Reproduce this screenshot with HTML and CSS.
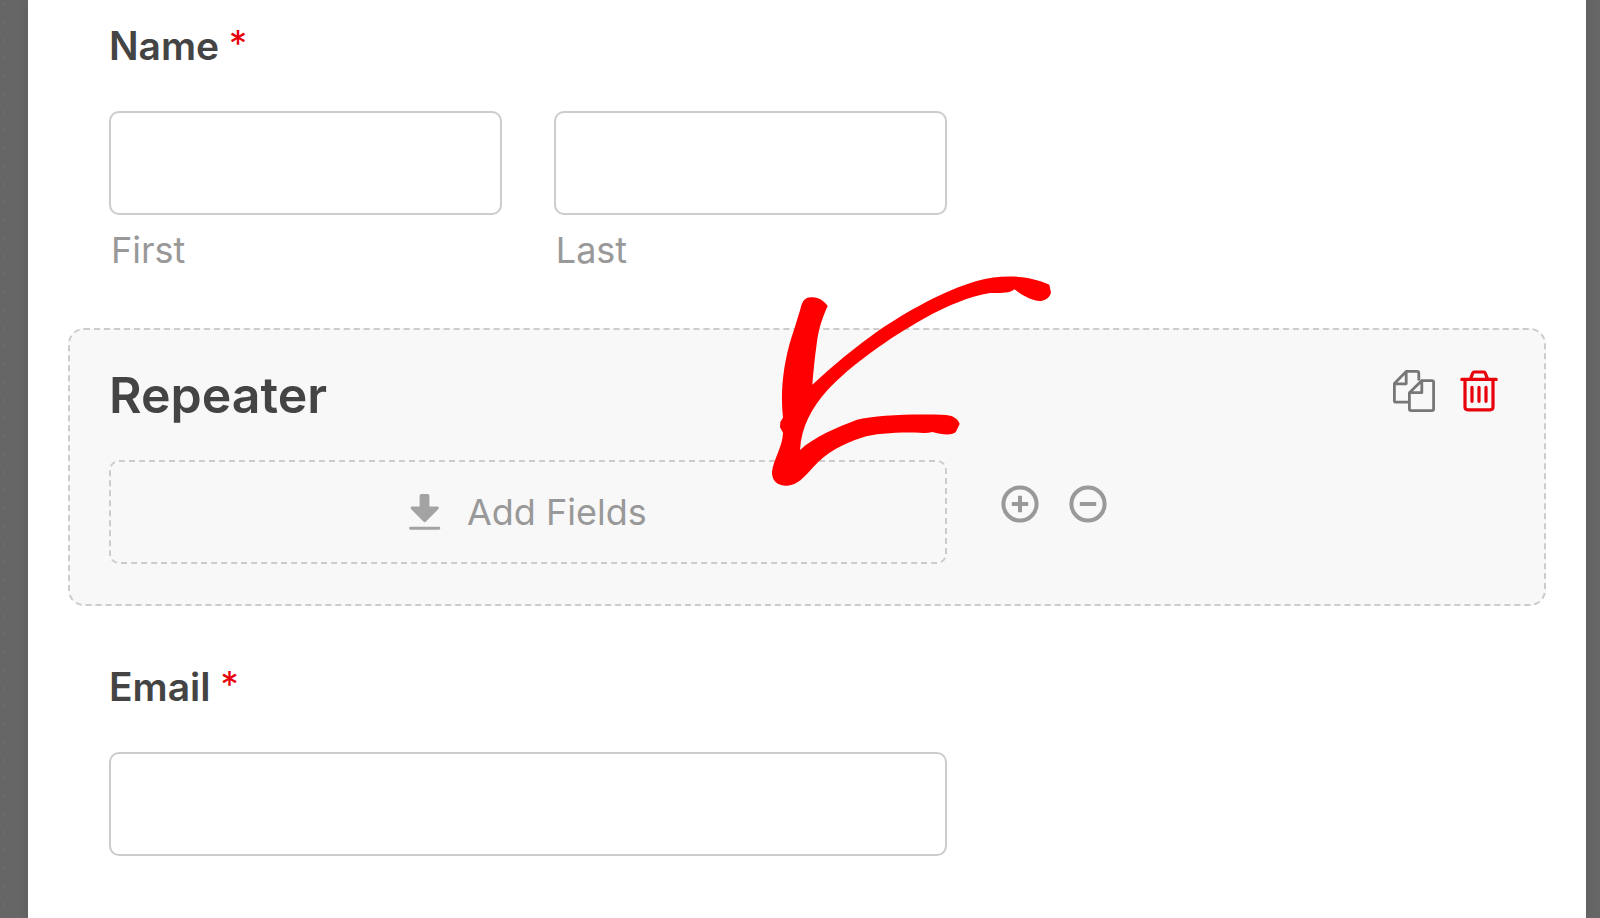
FILE: index.html
```html
<!DOCTYPE html>
<html lang="en">
<head>
<meta charset="utf-8">
<title>Form preview</title>
<link rel="stylesheet" href="styles.css">
</head>
<body>
<main class="sheet">
  <form class="form">
    <fieldset class="field">
      <legend class="label">Name <span class="required">*</span></legend>
      <div class="control name-row">
        <div class="part">
          <input class="input" id="first" type="text">
          <label class="sublabel" for="first">First</label>
        </div>
        <div class="part">
          <input class="input" id="last" type="text">
          <label class="sublabel" for="last">Last</label>
        </div>
      </div>
    </fieldset>

    <section class="repeater">
      <header class="repeater-head">
        <h2 class="title">Repeater</h2>
        <div class="actions">
          <button class="icon-button copy" type="button" aria-label="Duplicate">
            <svg width="42" height="42" viewBox="0 0 42 42" fill="none" stroke="currentColor" stroke-width="2.8" stroke-linejoin="round">
              <path d="M16 32.2H3.2Q1.4 32.2 1.4 30.4V13.5L13.2 1.4H24Q25.8 1.4 25.8 3.2V10.5M13.2 2V13.8H2"/>
              <path d="M28.8 10.6H39Q40.6 10.6 40.6 12.2V38.8Q40.6 40.6 38.8 40.6H18.2Q16.4 40.6 16.4 38.8V22.7L28.8 10.6V22.7H17"/>
            </svg>
          </button>
          <button class="icon-button trash" type="button" aria-label="Delete">
            <svg width="38" height="42" viewBox="0 0 38 42" fill="none" stroke="currentColor" stroke-width="3.2" stroke-linecap="round" stroke-linejoin="round">
              <path d="M1.8 9.4H36.2M10.5 8.8L12.8 3Q13.2 2 14.2 2H23.8Q24.8 2 25.2 3L27.5 8.8M5 10V37Q5 39.8 8 39.8H30Q33 39.8 33 37V10"/>
              <path d="M12 17.3V31.3M19 17.3V31.3M26 17.3V31.3"/>
            </svg>
          </button>
        </div>
      </header>
      <div class="repeater-row">
        <button class="control dropzone" type="button">
          <svg width="32" height="38" viewBox="0 0 32 38" fill="#a3a3a3">
            <path d="M12.3 1H18.7Q20.4 1 20.4 2.7V13.6H28.6Q30.6 14.2 29.4 16L17 28.6Q15.7 29.8 14.4 28.6L2 16Q.8 14.2 2.8 13.6H10.6V2.7Q10.6 1 12.3 1Z"/>
            <rect x="0.2" y="33.8" width="31" height="3" rx="1.4"/>
          </svg>
          <span>Add Fields</span>
        </button>
        <button class="icon-button round" type="button" aria-label="Add row">
          <svg width="38" height="38" viewBox="0 0 38 38" fill="none" stroke="currentColor" stroke-width="4">
            <circle cx="19" cy="19" r="16.6"/><path d="M10.8 19H27.2M19 10.8V27.2"/>
          </svg>
        </button>
        <button class="icon-button round" type="button" aria-label="Remove row">
          <svg width="38" height="38" viewBox="0 0 38 38" fill="none" stroke="currentColor" stroke-width="4">
            <circle cx="19" cy="19" r="16.6"/><path d="M10.8 19H27.2"/>
          </svg>
        </button>
      </div>
      <svg class="arrow" width="340" height="240" viewBox="0 0 1020 720" fill="#f00" aria-hidden="true">
        <path d="M181 148C187 122 195 113 212 112C232 109 253 122 263 138C242 184 235 215 230 252C224 297 220 335 217 374C280 316 347 260 417 211C500 155 610 92 710 63C765 47 820 47 863 54C890 60 910 66 928 74L933 98C928 115 912 123 898 123C867 120 843 103 823 88C811 98 797 100 750 99C690 108 620 138 555 174C450 232 330 317 262 391C216 443 184 499 180 570C221 531 292 501 351 479C405 466 520 461 618 465C642 467 656 480 659 492L647 517C629 529 603 522 577 516Q560 520 540 518C480 516 407 519 365 533C310 551 260 576 220 621C190 654 173 675 142 677C112 678 95 661 96 635C101 596 128 560 129 518L120 502L121 486L129 473C120 394 131 310 153 237Q167 195 181 148Z"/>
      </svg>
    </section>

    <div class="field">
      <label class="label" for="email">Email <span class="required">*</span></label>
      <div class="control">
        <input class="input" id="email" type="email">
      </div>
    </div>
  </form>
</main>
</body>
</html>
```
FILE: styles.css
```css
* {
  box-sizing: border-box;
}

body {
  margin: 0;
  min-height: 100vh;
  display: flex;
  padding: 0 14px 0 28px;
  background: radial-gradient(circle at 4px 4px, #858585 0, #666 1px) 0 0 / 28px 18px repeat-y #666;
  color: #444;
  font-family: Inter, "Liberation Sans", sans-serif;
}

.sheet {
  flex: 1;
  padding: 21px 40px 60px;
  background: #fff;
  box-shadow: 0 0 10px rgba(0, 0, 0, 0.1);
}

.form {
  display: flex;
  flex-direction: column;
  gap: 56px;
}

.field {
  min-width: 0;
  margin: 0;
  padding: 0 41px;
  border: 0;
}

.label {
  display: block;
  margin-bottom: 40px;
  padding: 0;
  font-size: 39px;
  font-weight: 600;
  line-height: 50px;
}

.required {
  color: #e8000b;
  font-size: 36px;
  font-weight: 400;
  line-height: 1;
  vertical-align: 4px;
}

.control {
  width: 60%;
}

.name-row {
  display: grid;
  grid-template-columns: 1fr 1fr;
  gap: 52px;
}

.input {
  display: block;
  width: 100%;
  height: 104px;
  padding: 0 24px;
  border: 2px solid #ccc;
  border-radius: 10px;
  background: #fff;
  color: inherit;
  font: inherit;
  font-size: 36px;
}

.sublabel {
  display: block;
  margin-top: 13px;
  padding-left: 2px;
  color: #999;
  font-size: 36px;
  line-height: 44px;
}

.repeater {
  position: relative;
  padding: 34px 39px 40px;
  border: 2px dashed #ccc;
  border-radius: 16px;
  background: #f8f8f8;
}

.repeater-head {
  display: flex;
  justify-content: space-between;
  margin-bottom: 34px;
}

.title {
  margin: 0;
  font-size: 50px;
  font-weight: 600;
  line-height: 62px;
}

.actions {
  display: flex;
  align-items: flex-start;
  gap: 25px;
  padding: 6px 7px 0 0;
}

.icon-button {
  display: block;
  padding: 0;
  border: 0;
  background: none;
}

.icon-button svg {
  display: block;
}

.copy {
  color: #777;
}

.trash {
  color: #e8000b;
}

.repeater-row {
  display: flex;
  align-items: center;
}

.dropzone {
  display: flex;
  align-items: center;
  justify-content: center;
  gap: 26px;
  height: 104px;
  margin-right: 24px;
  padding: 0;
  border: 2px dashed #ccc;
  border-radius: 10px;
  background: none;
  color: #999;
  font: inherit;
  font-size: 36px;
}

.round {
  margin: 0 0 16px 30px;
  color: #999;
}

.arrow {
  position: absolute;
  top: -70px;
  left: 670px;
  pointer-events: none;
}
```
